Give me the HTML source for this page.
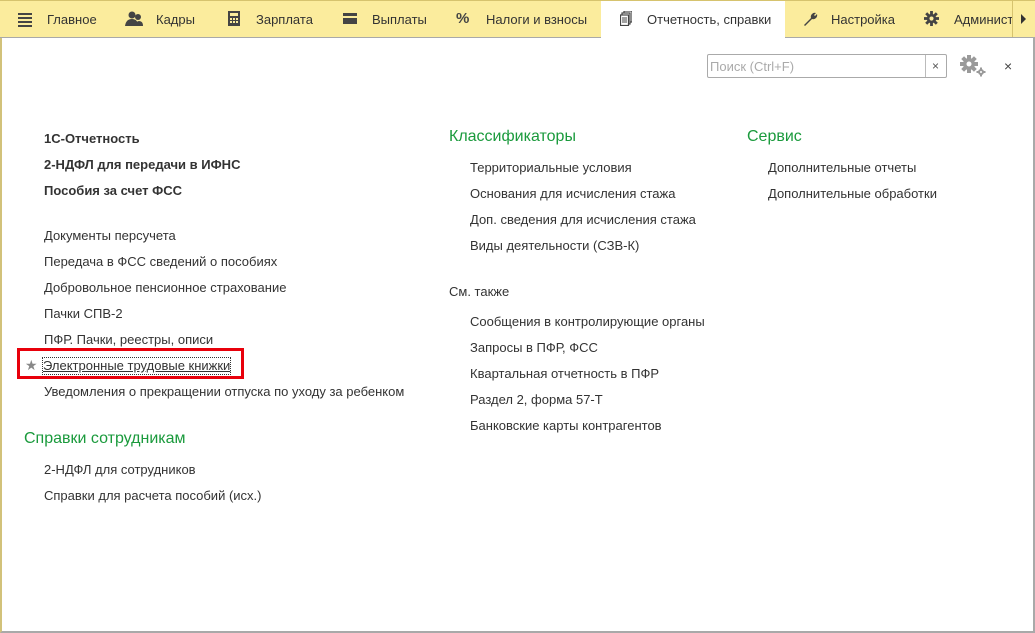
<!DOCTYPE html><html><head><meta charset="utf-8"><style>
*{margin:0;padding:0;box-sizing:border-box}
body{width:1035px;height:633px;overflow:hidden;background:#fff;font-family:"Liberation Sans",Arial,sans-serif;font-size:13px;color:#333;position:relative}
.bar{position:absolute;left:0;top:0;width:1035px;height:38px;background:#fbec9d;border-top:1px solid #d6c36e;border-bottom:1px solid #a9a9a9}
.t{position:absolute;top:12px;font-size:13px;color:#333;line-height:16px;white-space:nowrap}
.act{position:absolute;left:601px;top:1px;width:184px;height:37px;background:#fff}
.frame{position:absolute;left:0;top:38px;width:1035px;height:595px;border-left:2px solid #d2c27a;border-right:2px solid #a9a9a9;border-bottom:2px solid #a9a9a9}
.i{position:absolute;line-height:16px;white-space:nowrap;margin-top:1px}
.b{font-weight:bold}
.h{position:absolute;color:#1a9a3c;font-size:16px;line-height:18px;white-space:nowrap;margin-top:1px}
.ic{position:absolute;background:#444}
</style></head><body>
<div class="bar"></div>
<div class="act"></div>
<div class="ic" style="left:18px;top:13px;width:14px;height:2px"></div>
<div class="ic" style="left:18px;top:17px;width:14px;height:2px"></div>
<div class="ic" style="left:18px;top:21px;width:14px;height:2px"></div>
<div class="ic" style="left:18px;top:25px;width:14px;height:2px"></div>
<svg style="position:absolute;left:125px;top:11px" width="18" height="16"><circle cx="7" cy="4" r="3.5" fill="#444"/><circle cx="13" cy="6" r="3" fill="#444"/><path d="M0 15 Q1 8 7 8 Q13 8 13 15Z" fill="#444"/><path d="M10 15 Q11 10 14 10 Q18 10 18 15Z" fill="#444"/></svg>
<svg style="position:absolute;left:228px;top:11px" width="12" height="15"><rect x="0" y="0" width="12" height="15" fill="#444"/><rect x="2" y="2" width="8" height="3" fill="#fbec9d"/><g fill="#fbec9d"><rect x="2" y="7" width="2" height="2"/><rect x="5" y="7" width="2" height="2"/><rect x="8" y="7" width="2" height="2"/><rect x="2" y="10" width="2" height="2"/><rect x="5" y="10" width="2" height="2"/><rect x="8" y="10" width="2" height="2"/></g></svg>
<svg style="position:absolute;left:343px;top:13px" width="14" height="11"><rect width="14" height="11" fill="#444"/><rect y="3" width="14" height="2" fill="#fbec9d"/></svg>
<div class="t" style="left:456px;top:11px;font-weight:bold;font-size:15px;color:#444">%</div>
<svg style="position:absolute;left:620px;top:11px" width="12" height="15"><rect x="4" y="0" width="8" height="11" fill="none" stroke="#444" stroke-width="1.2"/><rect x="2" y="2" width="8" height="11" fill="#fff" stroke="#444" stroke-width="1.2"/><rect x="0.5" y="4" width="8" height="10.5" fill="#fff" stroke="#444" stroke-width="1.2"/><path d="M2 7h5M2 9h5M2 11h5" stroke="#444"/></svg>
<svg style="position:absolute;left:802px;top:11px" width="16" height="16"><path d="M2 14 L9 7 A4 4 0 0 1 14 2 L12 4 L13 5 L15 3 A4 4 0 0 1 10 8 L3 15Z" fill="#444"/></svg>
<svg style="position:absolute;left:924px;top:11px" width="15" height="15" viewBox="0 0 16 16"><g fill="#444"><circle cx="8" cy="8" r="5"/><rect x="6.5" y="0" width="3" height="16"/><rect x="0" y="6.5" width="16" height="3"/><rect x="6.5" y="0" width="3" height="16" transform="rotate(45 8 8)"/><rect x="6.5" y="0" width="3" height="16" transform="rotate(-45 8 8)"/></g><circle cx="8" cy="8" r="2.2" fill="#fbec9d"/></svg>
<div class="t" style="left:47px">Главное</div>
<div class="t" style="left:156px">Кадры</div>
<div class="t" style="left:256px">Зарплата</div>
<div class="t" style="left:372px">Выплаты</div>
<div class="t" style="left:486px">Налоги и взносы</div>
<div class="t" style="left:647px">Отчетность, справки</div>
<div class="t" style="left:831px">Настройка</div>
<div class="t" style="left:954px;width:58px;overflow:hidden">Администрирование</div>
<div style="position:absolute;left:1012px;top:1px;width:1px;height:36px;background:#d6c36e"></div>
<div style="position:absolute;left:1021px;top:14px;width:0;height:0;border-left:5px solid #333;border-top:5px solid transparent;border-bottom:5px solid transparent"></div>
<div class="frame"></div>
<div style="position:absolute;left:707px;top:54px;width:240px;height:24px;border:1px solid #aaa;border-radius:2px;background:#fff"></div>
<div style="position:absolute;left:925px;top:55px;width:1px;height:22px;background:#bbb"></div>
<div class="i" style="left:710px;top:58px;color:#aaa">Поиск (Ctrl+F)</div>
<div class="i" style="left:932px;top:57px;font-size:12px;color:#555">×</div>
<svg style="position:absolute;left:959px;top:54px" width="28" height="24" viewBox="0 0 28 24"><g fill="#9a9a9a"><circle cx="10" cy="10" r="6"/><rect x="8" y="1" width="4" height="18"/><rect x="1" y="8" width="18" height="4"/><rect x="8" y="1" width="4" height="18" transform="rotate(45 10 10)"/><rect x="8" y="1" width="4" height="18" transform="rotate(-45 10 10)"/><circle cx="22" cy="18" r="3"/><rect x="21" y="13.5" width="2" height="9"/><rect x="17.5" y="17" width="9" height="2"/></g><circle cx="10" cy="10" r="2.5" fill="#fff"/><circle cx="22" cy="18" r="1" fill="#fff"/></svg>
<div class="i" style="left:1004px;top:57px;font-size:14px;color:#444">×</div>
<div class="i b" style="left:44px;top:130px">1С-Отчетность</div>
<div class="i b" style="left:44px;top:156px">2-НДФЛ для передачи в ИФНС</div>
<div class="i b" style="left:44px;top:182px">Пособия за счет ФСС</div>
<div class="i" style="left:44px;top:227px">Документы персучета</div>
<div class="i" style="left:44px;top:253px">Передача в ФСС сведений о пособиях</div>
<div class="i" style="left:44px;top:279px">Добровольное пенсионное страхование</div>
<div class="i" style="left:44px;top:305px">Пачки СПВ-2</div>
<div class="i" style="left:44px;top:331px">ПФР. Пачки, реестры, описи</div>
<div style="position:absolute;left:17px;top:348px;width:227px;height:31px;border:3px solid #e8000b"></div>
<div class="i" style="left:25px;top:356px;color:#888;font-size:14px">★</div>
<div class="i" style="left:43px;top:357px;text-decoration:underline;outline:1px dotted #333">Электронные трудовые книжки</div>
<div class="i" style="left:44px;top:383px">Уведомления о прекращении отпуска по уходу за ребенком</div>
<div class="h" style="left:24px;top:429px">Справки сотрудникам</div>
<div class="i" style="left:44px;top:461px">2-НДФЛ для сотрудников</div>
<div class="i" style="left:44px;top:487px">Справки для расчета пособий (исх.)</div>
<div class="h" style="left:449px;top:127px">Классификаторы</div>
<div class="i" style="left:470px;top:159px">Территориальные условия</div>
<div class="i" style="left:470px;top:185px">Основания для исчисления стажа</div>
<div class="i" style="left:470px;top:211px">Доп. сведения для исчисления стажа</div>
<div class="i" style="left:470px;top:237px">Виды деятельности (СЗВ-К)</div>
<div class="i" style="left:449px;top:283px">См. также</div>
<div class="i" style="left:470px;top:313px">Сообщения в контролирующие органы</div>
<div class="i" style="left:470px;top:339px">Запросы в ПФР, ФСС</div>
<div class="i" style="left:470px;top:365px">Квартальная отчетность в ПФР</div>
<div class="i" style="left:470px;top:391px">Раздел 2, форма 57-Т</div>
<div class="i" style="left:470px;top:417px">Банковские карты контрагентов</div>
<div class="h" style="left:747px;top:127px">Сервис</div>
<div class="i" style="left:768px;top:159px">Дополнительные отчеты</div>
<div class="i" style="left:768px;top:185px">Дополнительные обработки</div>
</body></html>
